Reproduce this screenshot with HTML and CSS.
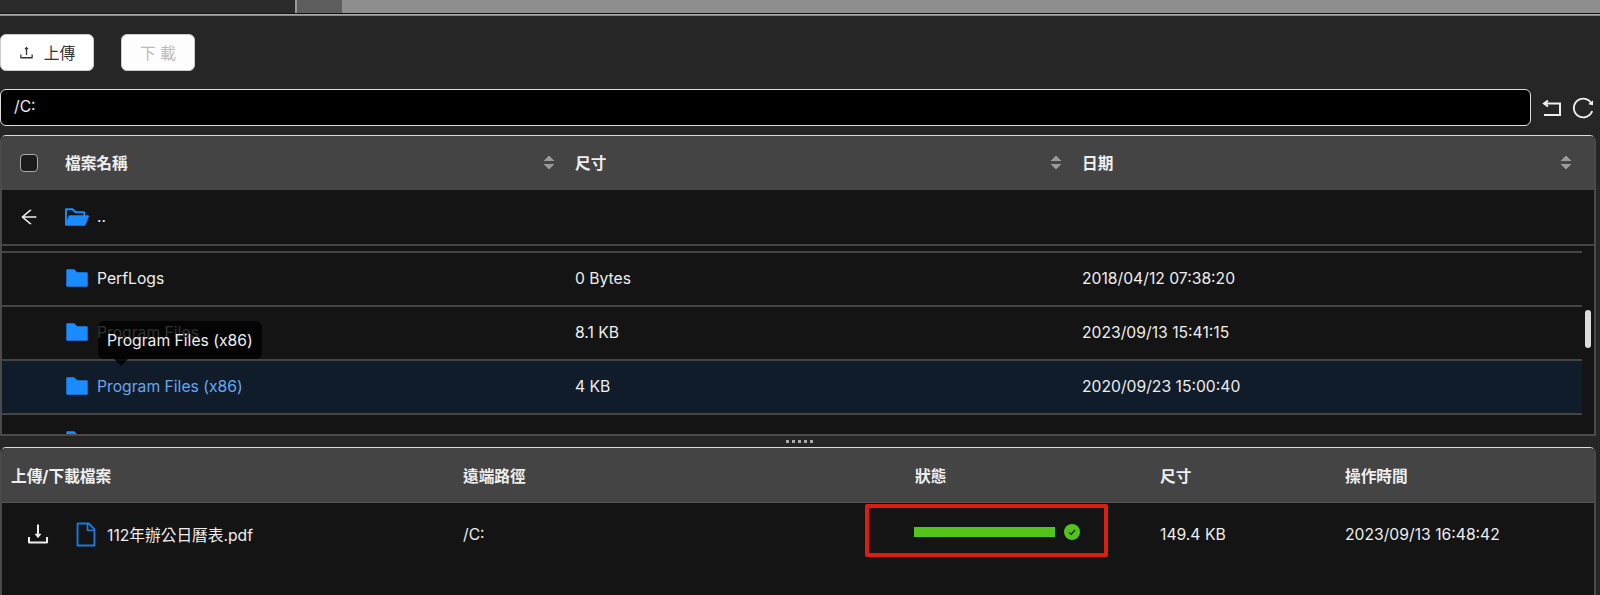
FILE: index.html
```html
<!DOCTYPE html>
<html lang="zh-Hant">
<head>
    <meta charset="UTF-8">
    <meta name="viewport" content="width=device-width, initial-scale=1.0">
    <title>檔案傳輸</title>
    <link rel="stylesheet" href="styles.css">
</head>
<body>

<div class="tab-strip">
    <div class="tab tab-active"></div>
    <div class="tab tab-mid"></div>
    <div class="tab tab-rest"></div>
</div>

<div class="toolbar">
    <button class="btn">
        <svg class="btn-icon" viewBox="64 64 896 896"><path d="M400 317.7h73.9V656c0 4.4 3.6 8 8 8h60c4.4 0 8-3.6 8-8V317.7H624c6.7 0 10.4-7.7 6.3-12.9L518.3 163a8 8 0 0 0-12.6 0l-112 141.7c-4.1 5.3-.4 13 6.3 13zM878 626h-60c-4.4 0-8 3.6-8 8v154H214V634c0-4.4-3.6-8-8-8h-60c-4.4 0-8 3.6-8 8v198c0 17.7 14.3 32 32 32h684c17.7 0 32-14.3 32-32V634c0-4.4-3.6-8-8-8z"/></svg>
        上傳
    </button>
    <button class="btn btn-disabled">下 載</button>
</div>

<div class="path-bar">
    <div class="path-input">/C:</div>
    <svg class="path-icon" viewBox="0 0 20 20"><path d="M6 2.5 2 5.5l4 3M2.5 5.5H18V17H2"/></svg>
    <svg class="path-icon reload" viewBox="64 64 896 896"><path d="M909.1 209.3l-56.4 44.1C775.8 155.1 656.2 92 521.9 92 290 92 102.3 279.5 102 511.5 101.7 743.7 289.8 932 521.9 932c181.3 0 335.8-115 394.6-276.1 1.5-4.2-.7-8.9-4.9-10.3l-56.7-19.5a8 8 0 0 0-10.1 4.8c-1.8 5-3.8 10-5.9 14.9-17.3 41-42.1 77.8-73.7 109.4A344.77 344.77 0 0 1 655.9 829c-42.3 17.9-87.4 27-133.8 27-46.5 0-91.5-9.1-133.8-27A341.5 341.5 0 0 1 279 755.2a342.16 342.16 0 0 1-73.7-109.4c-17.9-42.4-27-87.4-27-133.9s9.1-91.5 27-133.9c17.3-41 42.1-77.8 73.7-109.4 31.6-31.6 68.4-56.5 109.3-73.8 42.3-17.9 87.4-27 133.8-27 46.5 0 91.5 9.1 133.8 27a341.5 341.5 0 0 1 109.3 73.8c9.9 9.9 19.2 20.4 27.8 31.4l-60.2 47a8 8 0 0 0 3 14.1l175.6 43c5 1.2 9.9-2.6 9.9-7.7l.8-180.9c-.1-6.6-7.8-10.3-13-6.2z"/></svg>
</div>

<div class="card file-table">
    <div class="file-head file-cols">
        <div class="cell-check"><span class="checkbox"></span></div>
        <div class="head-cell">檔案名稱<span class="sorter"></span></div>
        <div class="head-cell">尺寸<span class="sorter"></span></div>
        <div class="head-cell">日期<span class="sorter"></span></div>
    </div>
    <div class="parent-row file-cols">
        <div class="cell-check">
            <svg class="back-icon" viewBox="64 64 896 896"><path d="M872 474H286.9l350.2-304c5.6-4.9 2.2-14-5.2-14h-88.5c-3.9 0-7.6 1.4-10.5 3.9L155 487.8a31.96 31.96 0 0 0 0 48.3L535.1 866c1.5 1.3 3.3 2 5.2 2h91.5c7.4 0 10.8-9.2 5.2-14L286.9 550H872c4.4 0 8-3.6 8-8v-60c0-4.4-3.6-8-8-8z"/></svg>
        </div>
        <div class="name-cell">
            <svg class="folder" viewBox="64 64 896 896"><path d="M928 444H820V330.4c0-17.7-14.3-32-32-32H473L355.7 186.2a8.15 8.15 0 0 0-5.5-2.2H96c-17.7 0-32 14.3-32 32v592c0 17.7 14.3 32 32 32h698c13 0 24.8-7.9 29.7-20l134-332c1.5-3.8 2.3-7.9 2.3-12 0-17.7-14.3-32-32-32zm-180 0H238c-13 0-24.8 7.9-29.7 20L136 643.2V256h188.5l119.6 114.4H748V444z"/></svg>
            ..
        </div>
    </div>
    <div class="file-list">
        <div class="file-row file-cols">
            <div></div>
            <div class="name-cell"><svg class="folder" viewBox="64 64 896 896"><use href="#folder-shape"/></svg>PerfLogs</div>
            <div>0 Bytes</div>
            <div>2018/04/12 07:38:20</div>
        </div>
        <div class="file-row file-cols">
            <div></div>
            <div class="name-cell"><svg class="folder" viewBox="64 64 896 896"><use href="#folder-shape"/></svg>Program Files</div>
            <div>8.1 KB</div>
            <div>2023/09/13 15:41:15</div>
        </div>
        <div class="file-row file-cols row-hover">
            <div></div>
            <div class="name-cell"><svg class="folder" viewBox="64 64 896 896"><use href="#folder-shape"/></svg>Program Files (x86)</div>
            <div>4 KB</div>
            <div>2020/09/23 15:00:40</div>
        </div>
        <div class="file-row file-cols">
            <div></div>
            <div class="name-cell"><svg class="folder" viewBox="64 64 896 896"><use href="#folder-shape"/></svg>ProgramData</div>
            <div>12 KB</div>
            <div>2023/09/13 15:41:15</div>
        </div>
        <div class="scroll-thumb"></div>
    </div>
    <div class="tooltip">Program Files (x86)</div>
</div>

<div class="splitter">
    <i></i><i></i><i></i><i></i><i></i>
</div>

<div class="card transfer-table">
    <div class="transfer-head transfer-cols">
        <div>上傳/下載檔案</div>
        <div>遠端路徑</div>
        <div>狀態</div>
        <div>尺寸</div>
        <div>操作時間</div>
    </div>
    <div class="transfer-row transfer-cols">
        <div class="transfer-name">
            <svg class="dl-icon" viewBox="64 64 896 896"><path d="M505.7 661a8 8 0 0 0 12.6 0l112-141.7c4.1-5.2.4-12.9-6.3-12.9h-74.1V168c0-4.4-3.6-8-8-8h-60c-4.4 0-8 3.6-8 8v338.3H400c-6.7 0-10.4 7.7-6.3 12.9l112 141.8zM878 626h-60c-4.4 0-8 3.6-8 8v154H214V634c0-4.4-3.6-8-8-8h-60c-4.4 0-8 3.6-8 8v198c0 17.7 14.3 32 32 32h684c17.7 0 32-14.3 32-32V634c0-4.4-3.6-8-8-8z"/></svg>
            <svg class="file-icon" viewBox="64 64 896 896"><path d="M854.6 288.6L639.4 73.4c-6-6-14.1-9.4-22.6-9.4H192c-17.7 0-32 14.3-32 32v832c0 17.7 14.3 32 32 32h640c17.7 0 32-14.3 32-32V311.3c0-8.5-3.4-16.7-9.4-22.7zM790.2 326H602V137.8L790.2 326zm1.8 562H232V136h302v216a42 42 0 0 0 42 42h216v494z"/></svg>
            112年辦公日曆表.pdf
        </div>
        <div>/C:</div>
        <div class="progress">
            <div class="progress-bar"></div>
            <svg class="progress-done" viewBox="0 0 16 16"><circle cx="8" cy="8" r="8"/><path d="M5 8.2 7.2 10.4 11 6"/></svg>
        </div>
        <div>149.4 KB</div>
        <div>2023/09/13 16:48:42</div>
    </div>
    <div class="red-mark"></div>
</div>

<svg class="defs"><defs><path id="folder-shape" d="M880 298.4H521L403.7 186.2a8.15 8.15 0 0 0-5.5-2.2H144c-17.7 0-32 14.3-32 32v592c0 17.7 14.3 32 32 32h736c17.7 0 32-14.3 32-32V330.4c0-17.7-14.3-32-32-32z"/></defs></svg>

</body>
</html>
```

FILE: styles.css
```css
body {
    font-family: 'Inter', 'Noto Sans CJK TC', sans-serif;
    font-size: 15.7px;
    margin: 0;
    height: 595px;
    overflow: hidden;
    background-color: #262626;
    color: #eee;
}

/* Top strip */
.tab-strip {
    display: flex;
    height: 13px;
    border-bottom: 1px solid #111;
    box-shadow: 0 1px 0 #aaa, 0 2px 0 #888;
}

.tab-active {
    width: 295px;
    background-color: #2a2a2a;
}

.tab-mid {
    width: 45px;
    background-color: #5d5d5d;
    border-left: 2px solid #999;
}

.tab-rest {
    flex: 1;
    background-color: #8e8e8e;
}

/* Buttons */
.toolbar {
    display: flex;
    gap: 27px;
    padding-top: 20px;
}

.btn {
    display: flex;
    align-items: center;
    justify-content: center;
    gap: 10px;
    width: 94px;
    height: 37px;
    padding: 0;
    border: 1px solid #ccc;
    border-radius: 6px;
    background-color: #fff;
    color: #333;
    font-family: inherit;
    font-size: 15.7px;
}

.btn-disabled {
    width: 74px;
    color: #bbb;
    background-color: #fdfdfd;
}

.btn-icon {
    width: 15px;
    height: 15px;
    fill: #333;
}

/* Path input */
.path-bar {
    display: flex;
    align-items: center;
    margin-top: 18px;
}

.path-input {
    width: 1516px;
    height: 35px;
    line-height: 34px;
    padding-left: 13px;
    background-color: #000;
    border: 1px solid #ddd;
    border-radius: 6px;
}

.path-icon {
    width: 20px;
    height: 20px;
    margin-left: 11px;
    fill: none;
    stroke: #eee;
    stroke-width: 2;
}

.reload {
    width: 22px;
    height: 22px;
    margin-left: 10px;
    fill: #eee;
    stroke: none;
}

/* Shared card */
.card {
    position: relative;
    background-color: #141414;
    border-style: solid;
    border-color: #ddd #4a4a4a #4a4a4a;
    border-radius: 6px 6px 0 0;
    box-sizing: border-box;
}

/* File table */
.file-table {
    margin-top: 9px;
    width: 1596px;
    height: 301px;
    border-width: 1px 2px 2px 2px;
}

.file-cols {
    display: grid;
    grid-template-columns: 50px 510px 507px 1fr;
    align-items: center;
}

.file-head {
    height: 53px;
    padding-bottom: 1px;
    background-color: #444;
    font-weight: 700;
    border-radius: 5px 5px 0 0;
}

.cell-check {
    display: flex;
    justify-content: center;
    padding-left: 3px;
}

.checkbox {
    width: 16px;
    height: 16px;
    background-color: #1c1c1c;
    border: 1px solid #aaa;
    border-radius: 4px;
}

.head-cell {
    display: flex;
    align-items: center;
    justify-content: space-between;
    padding: 0 8px 0 13px;
}

.head-cell:last-child {
    padding-right: 23px;
}

.sorter {
    width: 10px;
    height: 15px;
    background-image:
        linear-gradient(to bottom right, transparent 50%, #999 50%),
        linear-gradient(to bottom left, transparent 50%, #999 50%),
        linear-gradient(to top right, transparent 50%, #999 50%),
        linear-gradient(to top left, transparent 50%, #999 50%);
    background-size: 5px 6px;
    background-repeat: no-repeat;
    background-position: 0 0, 5px 0, 0 9px, 5px 9px;
}

.parent-row {
    height: 53px;
    padding-bottom: 1px;
    border-bottom: 2px solid #444;
    box-sizing: content-box;
}

.back-icon {
    width: 18px;
    height: 18px;
    fill: #eee;
}

.name-cell {
    display: flex;
    align-items: center;
    gap: 8px;
}

.folder {
    width: 24px;
    height: 24px;
    fill: #1a8cff;
}

.file-list {
    position: relative;
    height: 188px;
    overflow: hidden;
    padding-top: 5px;
    box-sizing: border-box;
}

.file-row {
    height: 50px;
    padding-bottom: 2px;
    width: 1580px;
    border-top: 2px solid #444;
}

.file-row > div,
.parent-row > .name-cell {
    padding-left: 13px;
}

.row-hover {
    background-color: #111c2b;
}

.row-hover .name-cell {
    color: #69a7ec;
}

.scroll-thumb {
    position: absolute;
    top: 64px;
    right: 3px;
    width: 6px;
    height: 38px;
    background-color: #ddd;
    border-radius: 3px;
}

.tooltip {
    position: absolute;
    left: 96px;
    top: 185px;
    height: 38px;
    line-height: 40px;
    padding: 0 9px;
    background-color: rgba(0, 0, 0, 0.8);
    border-radius: 6px;
}

.tooltip::after {
    content: '';
    position: absolute;
    left: 16px;
    bottom: -7px;
    border-left: 7px solid transparent;
    border-right: 7px solid transparent;
    border-top: 7px solid rgba(0, 0, 0, 0.8);
}

/* Splitter */
.splitter {
    display: flex;
    justify-content: center;
    gap: 3px;
    height: 11px;
    align-items: center;
    padding-right: 2px;
}

.splitter i {
    width: 3px;
    height: 3px;
    background-color: #aaa;
}

/* Transfer table */
.transfer-table {
    width: 1596px;
    height: 150px;
    border-width: 1px 2px 0 2px;
}

.transfer-cols {
    display: grid;
    grid-template-columns: 452px 452px 245px 185px 1fr;
    align-items: center;
}

.transfer-head {
    height: 54px;
    padding-left: 9px;
    background-color: #444;
    font-weight: 700;
    border-bottom: 1px solid #555;
    border-radius: 5px 5px 0 0;
}

.transfer-row {
    height: 62px;
    padding-left: 9px;
}

.transfer-name {
    display: flex;
    align-items: center;
    padding-left: 15px;
}

.dl-icon {
    width: 24px;
    height: 24px;
    fill: #eee;
}

.file-icon {
    width: 24px;
    height: 25px;
    margin: 0 9px 0 24px;
    fill: #1a78dc;
}

.progress {
    display: flex;
    align-items: center;
    gap: 9px;
    margin: 0 0 4px -1px;
}

.progress-bar {
    width: 141px;
    height: 10px;
    background-color: #52c41a;
}

.progress-done {
    width: 16px;
    height: 16px;
}

.progress-done circle {
    fill: #52c41a;
}

.progress-done path {
    fill: none;
    stroke: #141414;
    stroke-width: 1.2;
}

/* Red annotation over the screenshot */
.red-mark {
    position: absolute;
    left: 863px;
    top: 56px;
    width: 243px;
    height: 53px;
    border: 4px solid #d92010;
    border-radius: 2px;
    box-sizing: border-box;
}

.defs {
    position: absolute;
    width: 0;
    height: 0;
}
```
